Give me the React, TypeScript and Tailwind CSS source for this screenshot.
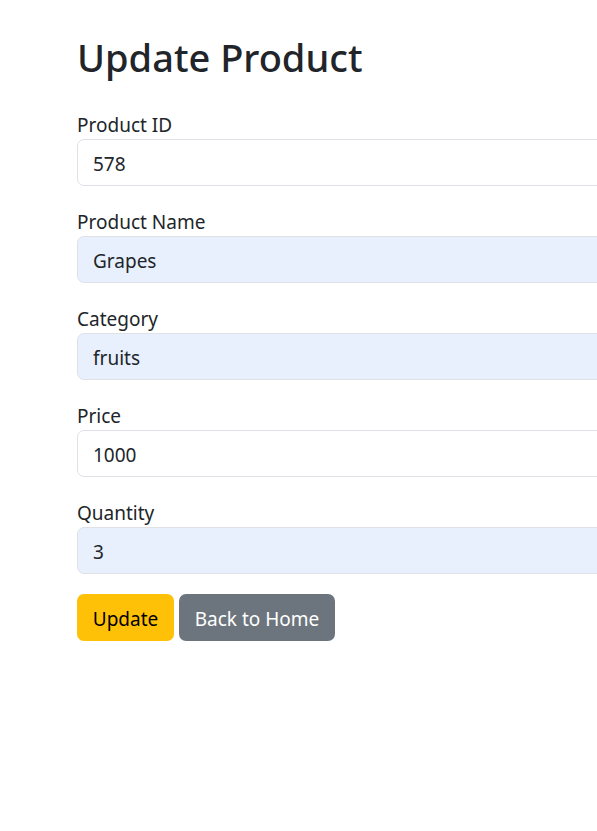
import React from "react";

const fields = [
  { label: "Product ID", value: "578", filled: false },
  { label: "Product Name", value: "Grapes", filled: true },
  { label: "Category", value: "fruits", filled: true },
  { label: "Price", value: "1000", filled: false },
  { label: "Quantity", value: "3", filled: true },
];

export default function App() {
  return (
    <div
      className="w-[597px] h-[831px] overflow-hidden bg-white text-[#212529]"
      style={{ fontFamily: '"Noto Sans", "Open Sans", sans-serif' }}
    >
      <div className="w-[760px] pl-[77px] pt-[33px]">
        <h1 className="text-[38px] leading-[48px] font-medium mb-[28px]">Update Product</h1>

        <form onSubmit={(e) => e.preventDefault()}>
          {fields.map((f) => (
            <div key={f.label} className="mb-[20px]">
              <label className="block text-[19px] leading-[30px] pt-[1px] -mb-[1px]">{f.label}</label>
              <input
                defaultValue={f.value}
                className={`block w-full h-[47px] px-[15px] pt-[2px] text-[19px] text-[#212529] border border-[#dee2e6] rounded-[7px] outline-none ${
                  f.filled ? "bg-[#e8f0fe]" : "bg-white"
                }`}
              />
            </div>
          ))}

          <div className="flex gap-[5px]">
            <button className="h-[47px] px-[15px] pt-[3px] text-[19px] bg-[#ffc107] text-black rounded-[7px] w-[97px]">
              Update
            </button>
            <button className="h-[47px] px-[15px] pt-[3px] text-[19px] bg-[#6c757d] text-white rounded-[7px] w-[156px]">
              Back to Home
            </button>
          </div>
        </form>
      </div>
    </div>
  );
}
